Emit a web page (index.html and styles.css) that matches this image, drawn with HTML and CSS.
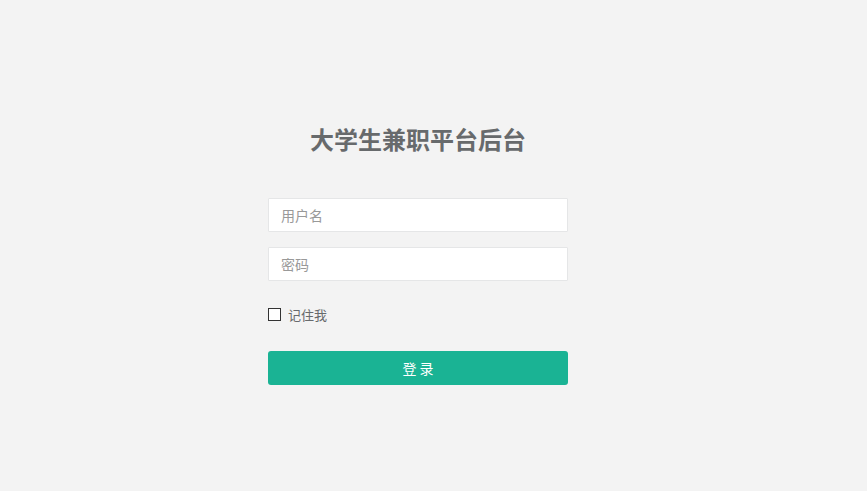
FILE: index.html
```html
<!DOCTYPE html>
<html>
<head>
<meta charset="utf-8">
<link rel="stylesheet" href="styles.css">
</head>
<body>
<div class="page">
  <div class="login">
    <h1 class="title">大学生兼职平台后台</h1>
    <form class="form">
      <input class="field" type="text" placeholder="用户名">
      <input class="field" type="password" placeholder="密码">
      <label class="remember"><span class="box"></span><span>记住我</span></label>
      <button class="btn" type="button">登 录</button>
    </form>
  </div>
</div>
</body>
</html>
```
FILE: styles.css
```css
html, body {
  margin: 0;
  padding: 0;
  background: #f3f3f3;
  font-family: "Noto Sans CJK SC", "Liberation Sans", sans-serif;
}
.page {
  display: flex;
  justify-content: center;
  padding-right: 31px;
  padding-top: 124px;
}
.login {
  width: 300px;
  display: flex;
  flex-direction: column;
}
.title {
  margin: 0;
  text-align: center;
  font-size: 24px;
  line-height: 30px;
  font-weight: bold;
  color: #676a6c;
}
.form {
  display: flex;
  flex-direction: column;
  margin-top: 44px;
}
.field {
  box-sizing: border-box;
  height: 34px;
  width: 300px;
  border: 1px solid #e5e6e7;
  background: #fff;
  padding: 0 12px;
  font-size: 14px;
  font-family: inherit;
  color: #676a6c;
  margin: 0 0 15px 0;
  outline: none;
  border-radius: 1px;
}
.field::placeholder {
  color: #999;
}
.remember {
  display: flex;
  align-items: center;
  gap: 7px;
  margin-top: 9px;
  height: 18px;
  font-size: 13px;
  color: #676a6c;
}
.box {
  box-sizing: border-box;
  width: 13px;
  height: 13px;
  border: 1px solid #333;
  background: #fff;
}
.btn {
  margin-top: 28px;
  height: 34px;
  width: 300px;
  border: none;
  border-radius: 3px;
  background: #1ab394;
  color: #fff;
  font-size: 14px;
  font-family: inherit;
  padding: 0;
}
```
